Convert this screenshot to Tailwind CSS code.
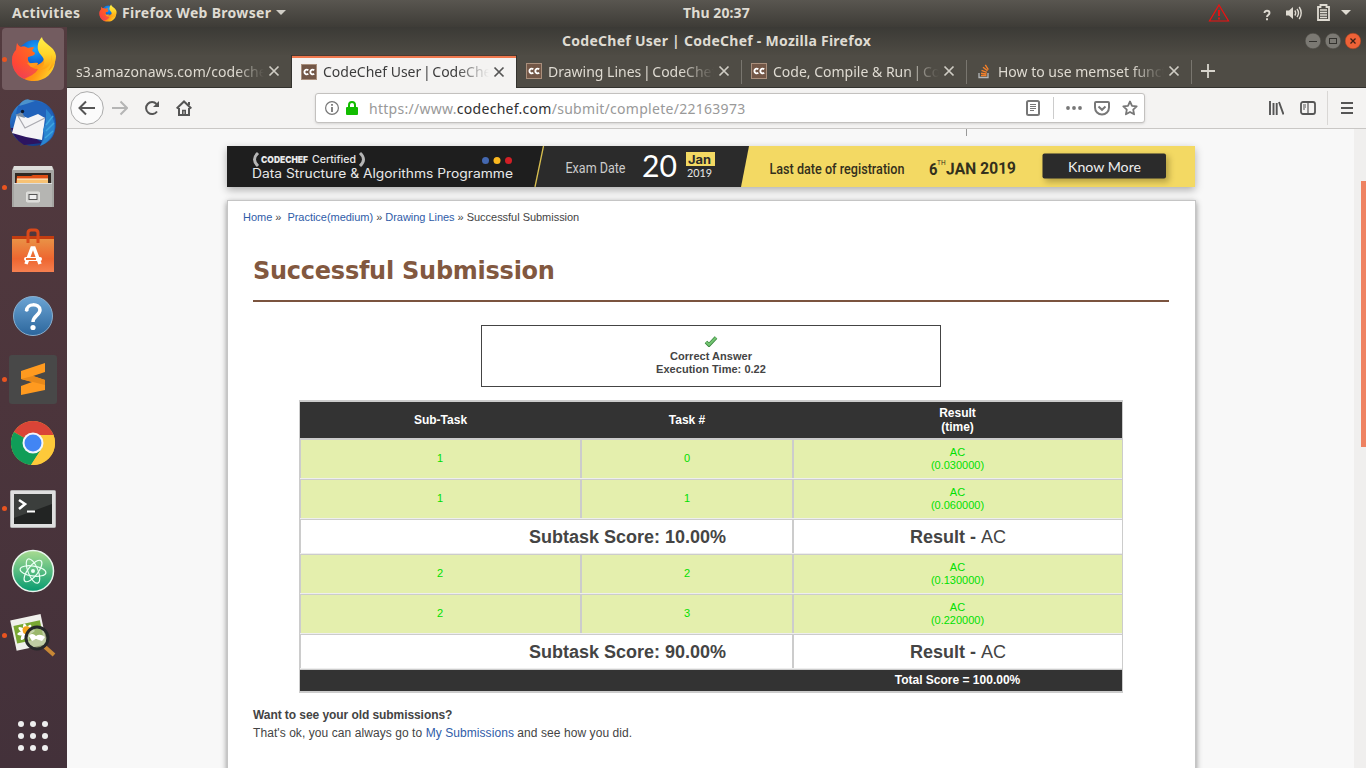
<!DOCTYPE html>
<html lang="en">
<head>
<meta charset="utf-8">
<title>CodeChef User | CodeChef</title>
<script src="https://cdn.jsdelivr.net/npm/@tailwindcss/browser@4"></script>
</head>
<body class="w-[1366px] h-[768px] overflow-hidden flex flex-col bg-[#f8f8f8] font-['Noto_Sans',sans-serif]">

<!-- shared shapes -->
<svg width="0" height="0" class="absolute">
  <defs>
    <symbol id="x" viewBox="0 0 12 12"><path d="M1.500 1.500 10.500 10.500M10.500 1.500 1.500 10.500" stroke="currentColor" stroke-width="1.700" fill="none"/></symbol>
    <symbol id="cc" viewBox="0 0 16 16"><rect x=".5" y=".5" width="15" height="15" fill="#735747" stroke="#a98f7c"/><path d="M7.300 6.200C5.600 4.900 3.400 5.900 3.400 8s2.200 3.100 3.900 1.800M13.200 6.200C11.500 4.900 9.300 5.900 9.300 8s2.200 3.100 3.900 1.800" fill="none" stroke="#fff" stroke-width="1.900"/></symbol>
    <linearGradient id="ffBody" x1="0" y1=".2" x2="1" y2=".7"><stop offset="0" stop-color="#ff2a4d"/><stop offset=".35" stop-color="#ff6a1c"/><stop offset=".7" stop-color="#ff9a14"/><stop offset="1" stop-color="#ffd42a"/></linearGradient>
    <linearGradient id="ffPink" x1="0" y1="0" x2="0" y2="1"><stop offset="0" stop-color="#ff7a18"/><stop offset=".55" stop-color="#ff4438"/><stop offset="1" stop-color="#e8177a"/></linearGradient>
    <linearGradient id="ffTail" x1="0" y1="0" x2="0" y2="1"><stop offset="0" stop-color="#fff04a"/><stop offset=".5" stop-color="#ffd52a"/><stop offset="1" stop-color="#ff9a10"/></linearGradient>
    <radialGradient id="ffBlue" cx=".5" cy=".25" r=".7"><stop offset="0" stop-color="#1aa6ff"/><stop offset=".6" stop-color="#0a5fd0"/><stop offset="1" stop-color="#1d2f86"/></radialGradient>
    <symbol id="firefox" viewBox="0 0 46 46">
      <circle cx="24" cy="22" r="18" fill="url(#ffBlue)"/>
      <path d="M6 7c1 2 2 3.500 4 4 3-1 5 0 7 1l6-1-2 4 3 2-1 2-6 2c-1 3 1 7 6 8 4 1 7-2 9-4 4-8 2-12-3-19 9 3 16 11 15 20-1 11-10 19-21 19C11 45 1 37 1 24c0-5 2-8 4-10z" fill="url(#ffBody)"/>
      <path d="M6 7c1 2 2 3.500 4 4 3-1 5 0 7 1l6-1-2 4 3 2-1 2-6 2c-2 6 2 12 10 12-2 5-10 8-14 10C5 39 1 32 1 24c0-5 2-8 4-10z" fill="url(#ffPink)" opacity=".6"/>
      <path d="M31 1c-5 5-6 13-1 18 5 5 4 11-1 15 9-1 13-8 11-15 2 4 1 10-3 16 5-3 8-9 8-15C44 10 32 8 31 1z" fill="url(#ffTail)"/>
      <path d="M16 27c4 1 7-1 11 0 0 2-3 4-7 4z" fill="#ff9a1c"/>
    </symbol>
  </defs>
</svg>

<!-- desktop top bar -->
<header class="h-[27px] pb-[2px] shrink-0 flex items-center bg-linear-to-b from-[#595650] to-[#3e3c37] text-[#dfdbd2] text-[14px] font-bold relative">
  <span class="ml-3 w-[87px] tracking-[0.33px]">Activities</span>
  <svg class="w-[18px] h-[18px]"><use href="#firefox"/></svg>
  <span class="ml-[5px] w-[154px] whitespace-nowrap tracking-[0.31px]">Firefox Web Browser</span>
  <svg width="10" height="5"><path d="M0 0h10L5 5z" fill="#d0cdc6"/></svg>
  <span class="absolute left-[683px] whitespace-nowrap tracking-[0.1px]">Thu 20:37</span>
  <div class="ml-auto flex items-center pr-[15px] h-full">
    <svg class="mr-[32px]" width="22" height="19"><path d="M11 2 20.500 18H1.500z" fill="none" stroke="#f01010" stroke-width="1.200"/><path d="M11 7v6M11 14.500v2" stroke="#f01010" stroke-width="1.800"/></svg>
    <svg class="mr-[14px] mt-[5px]" width="10" height="12"><path d="M2.500 4c0-3 5-3 5 0 0 2-2.500 2-2.500 4M5 9.300v2" fill="none" stroke="#dfdbd2" stroke-width="1.900"/></svg>
    <svg class="mr-[15px]" width="16" height="14"><path d="M0 4.500h3L7 1v12L3 9.500H0z" fill="#dfdbd2"/><path d="M8.800 4.500q1.700 2.500 0 5M11 3q3 4 0 8M13.200 1q4 6 0 12" fill="none" stroke="#dfdbd2" stroke-width="1.400"/></svg>
    <svg class="mr-[11px]" width="13" height="17"><path d="M1 3h2.500V1h6v2H12v13H1z" fill="none" stroke="#dfdbd2" stroke-width="1.800"/><path d="M3 6h7M3 8.500h7M3 11h7M3 13.500h7" stroke="#dfdbd2" stroke-width="1.300"/></svg>
    <svg width="10" height="5"><path d="M0 0h10L5 5z" fill="#dfdbd2"/></svg>
  </div>
</header>

<div class="flex flex-1 min-h-0">
  <!-- launcher -->
  <aside class="w-[67px] pr-px shrink-0 bg-linear-to-b from-[#533b3f] via-[#4c353c] to-[#43313a] flex flex-col items-center">
    <div class="mt-px w-[62px] h-[62px] shrink-0 rounded-[4px] bg-[#735c60] flex items-center"><i class="w-[5px] h-[5px] rounded-full bg-[#e95420]"></i><svg class="ml-1 w-[46px] h-[46px]"><use href="#firefox"/></svg></div>
    <svg class="mt-[8px] shrink-0" width="50" height="50" viewBox="0 0 50 50">
      <defs><linearGradient id="tb" x2=".6" y2="1"><stop stop-color="#3f9be0"/><stop offset=".4" stop-color="#2163bb"/><stop offset="1" stop-color="#123a86"/></linearGradient></defs>
      <circle cx="25" cy="25" r="23" fill="url(#tb)"/>
      <path d="M3 30q2 10 13 17l18-2-20-15z" fill="#2c1460"/>
      <path d="M8 19C8 7 14 1 22 2c9 0 18 5 22 12 5 9 5 21-2 28-3 3-7 5-10 6 3-6 3-11 2-16l-20-8z" fill="#2163bb"/>
      <path d="M9 16 20 20 30 16 37 20 34 42Q19 40 4 35z" fill="#f4f4f6"/>
      <path d="M10 18l7 12 20-10" fill="none" stroke="#a9a9b0" stroke-width="1.200"/>
      <path d="M38 11c7 7 10 14 8 22-2 7-7 12-14 15 5-7 5-12 3-16l3-8z" fill="#2b86d0"/>
      <path d="m38 27 7-9M38 33l8-8M37 40l8-7" fill="none" stroke="#3fa6e0" stroke-width="1.500"/>
      <path d="M11 8C14 2 19 0 22 2l5 1-9 3z" fill="#4c93cc"/><path d="m7 17 7-3 3 6-7-2z" fill="#7a8ea4"/><circle cx="14.500" cy="13.500" r="1.700" fill="#0d1a30"/>
    </svg>
    <div class="mt-4 w-full flex items-center h-[46px] shrink-0"><i class="ml-[2px] w-[5px] h-[5px] rounded-full bg-[#e95420]"></i>
      <svg class="ml-[5px]" width="42" height="44"><path d="M2 1h38l2 4v37H0V5z" fill="#a5a5a2"/><path d="M2 1h38l1 4H1z" fill="#dededb"/><path d="M3 8h36v12H3z" fill="#302823"/><path d="M5 11h14l2-1h15v9H4z" fill="#df4f16"/><path d="M5 14h31v6H5z" fill="#f7c274"/><path d="M5 14h31" stroke="#fff4d8"/><path d="M2 18h38v24H2z" fill="#b5b5b2"/><path d="M2 18h38v1H2z" fill="#ddd"/><rect x="14.500" y="27" width="13" height="10" rx="1" fill="#d8d8d5" stroke="#e2e2df"/><rect x="17" y="29.500" width="8" height="5" fill="#eee" stroke="#555"/></svg></div>
    <svg class="mt-[17px] shrink-0" width="44" height="46"><defs><linearGradient id="bag" x2="0" y2="1"><stop stop-color="#e99246"/><stop offset=".6" stop-color="#ee6630"/><stop offset="1" stop-color="#f58050"/></linearGradient></defs><path d="M1 9h42v5H1z" fill="#c23c10"/><path d="M1 12h42v33H1z" fill="url(#bag)"/><path d="M17 16V6q0-3 3-3h4q3 0 3 3v10" fill="none" stroke="#d9491a" stroke-width="3"/><path d="m15 37 6-16h2l6 16" fill="none" stroke="#fff" stroke-width="3.500"/><rect x="13" y="30" width="18" height="4" rx="2" fill="#fff"/><path d="M15 32h10" stroke="#ef7031" stroke-width="2"/></svg>
    <svg class="mt-[22px] shrink-0" width="42" height="42"><defs><linearGradient id="hp" x2="0" y2="1"><stop stop-color="#6ba4d4"/><stop offset="1" stop-color="#2c669c"/></linearGradient></defs><circle cx="21" cy="21" r="19.500" fill="url(#hp)" stroke="#8bb0cf"/><path d="M14.500 16c0-8 13-8 13.500-1 0 5-7 6-7 12" fill="none" stroke="#fff" stroke-width="3.500"/><circle cx="14.700" cy="15" r="1.800" fill="#fff"/><circle cx="21" cy="32.500" r="2.600" fill="#fff"/></svg>
    <div class="mt-[17px] w-full flex items-center h-[50px] shrink-0"><i class="ml-[2px] w-[5px] h-[5px] rounded-full bg-[#e95420]"></i>
      <svg class="ml-[2px]" width="48" height="49"><rect width="48" height="49" rx="3" fill="#484848"/><path d="m12 16 24-8v9l-12 4 12 4v10L12 40v-9l11-4-11-3z" fill="#ff9a1f"/><path d="m12 24 12-3 12 4v5L12 24z" fill="#e8891a"/></svg></div>
    <svg class="mt-[16px] shrink-0" width="46" height="46"><circle cx="23" cy="23" r="22" fill="#fdc93a"/><path d="M23 23 3.950 12A22 22 0 0 1 42.050 12L43.500 15H23z" fill="#da4437"/><path d="M3.950 12A22 22 0 0 0 21 45L32 28 23 23z" fill="#109d58"/><path d="M21 45A22 22 0 0 0 43.500 15H23l9 13z" fill="#fdc93a"/><circle cx="23" cy="23" r="10.500" fill="#f4f6fa"/><circle cx="23" cy="23" r="8.500" fill="#4285f4"/></svg>
    <div class="mt-[20px] w-full flex items-center h-[44px] shrink-0"><i class="ml-[2px] w-[5px] h-[5px] rounded-full bg-[#e95420]"></i>
      <svg class="ml-[3px] mt-0.5" width="46" height="38"><rect x=".5" y=".5" width="45" height="37" rx="1" fill="#dfdfdf" stroke="#b5b5b5"/><rect x="4" y="4" width="38" height="30" fill="#222423"/><path d="M4 4h38v10L4 28z" fill="#3b3e3c"/><path d="m9 10 6 4-6 5" fill="none" stroke="#fff" stroke-width="2.600"/><path d="M17 21.500h8" stroke="#fff" stroke-width="2"/></svg></div>
    <svg class="mt-[19px] shrink-0" width="44" height="44"><defs><linearGradient id="at" x2="0" y2="1"><stop stop-color="#a9dc91"/><stop offset="1" stop-color="#069b70"/></linearGradient></defs><circle cx="22" cy="22" r="20.500" fill="url(#at)" stroke="#e9f6ee" stroke-width="1.500"/><g fill="none" stroke="#eafff4" stroke-width="1.200"><ellipse cx="22" cy="22" rx="5" ry="13" transform="rotate(-22 22 22)"/><ellipse cx="22" cy="22" rx="5" ry="13" transform="rotate(38 22 22)"/><ellipse cx="22" cy="22" rx="5" ry="13" transform="rotate(98 22 22)"/></g><circle cx="22" cy="22" r="2" fill="#eafff4"/></svg>
    <div class="mt-[19px] w-full flex items-center h-[46px] shrink-0"><i class="ml-[2px] w-[5px] h-[5px] rounded-full bg-[#e95420]"></i>
      <svg class="ml-[3px]" width="46" height="46"><g transform="rotate(-12 18 20)"><rect x="3" y="5" width="31" height="31" fill="#f0f0ec"/><rect x="5" y="11" width="27" height="18" fill="#79a832"/><g fill="#fff"><ellipse cx="16" cy="20" rx="9" ry="2.500"/><ellipse cx="16" cy="20" rx="2.500" ry="9"/><ellipse cx="16" cy="20" rx="9" ry="2.500" transform="rotate(45 16 20)"/><ellipse cx="16" cy="20" rx="9" ry="2.500" transform="rotate(-45 16 20)"/></g><circle cx="17" cy="18" r="4" fill="#f3a21a"/></g><path d="m35 35 9 8" stroke="#c88836" stroke-width="4"/><circle cx="27" cy="26" r="11" fill="#a9bd86" fill-opacity=".7" stroke="#26282a" stroke-width="3"/><path d="M19 24q3-4 7 0 4-3 9 1l-3 4-6-2-4 2z" fill="#fff"/></svg></div>
    <svg class="mt-[62px] shrink-0" width="32" height="32" fill="#eee"><circle cx="4" cy="4" r="3"/><circle cx="16" cy="4" r="3"/><circle cx="28" cy="4" r="3"/><circle cx="4" cy="16" r="3"/><circle cx="16" cy="16" r="3"/><circle cx="28" cy="16" r="3"/><circle cx="4" cy="28" r="3"/><circle cx="16" cy="28" r="3"/><circle cx="28" cy="28" r="3"/></svg>
  </aside>

  <main class="flex-1 min-w-0 flex flex-col">
    <!-- window title -->
    <div class="h-[28px] shrink-0 bg-linear-to-b from-[#3b3a36] to-[#4e4b44] flex items-center justify-end relative text-[#dfdbd2] pr-[5px] gap-1">
      <span class="absolute left-[495px] top-[3px] text-[14px] font-bold whitespace-nowrap tracking-[0.27px]">CodeChef User | CodeChef - Mozilla Firefox</span>
      <svg width="16" height="18"><circle cx="8" cy="9" r="7.800" fill="#7b7973" stroke="#4a4842" stroke-width=".5"/><path d="M4 9.500h8" stroke="#33322e"/></svg>
      <svg width="16" height="18"><circle cx="8" cy="9" r="7.800" fill="#7b7973" stroke="#4a4842" stroke-width=".5"/><rect x="4.500" y="6.500" width="7" height="5" fill="none" stroke="#33322e"/></svg>
      <svg width="16" height="18"><circle cx="8" cy="9" r="7.800" fill="#ee6237" stroke="#a8431f" stroke-width=".5"/><path d="m5.500 6.500 5 5m0-5-5 5" stroke="#3b2016" stroke-width="1.300"/></svg>
    </div>
    <!-- tabs -->
    <nav class="h-[33px] shrink-0 bg-[#4f4c45] flex text-[14px] text-[#dfdbd2] whitespace-nowrap border-b border-[#33322e]">
      <div class="w-[224px] flex items-center pl-[9px]"><span class="w-[188px] overflow-hidden mask-r-from-85% mask-r-to-100% tracking-[0.08px]">s3.amazonaws.com/codechef</span><svg class="ml-1 w-3 h-3 text-[#cfccc4]"><use href="#x"/></svg></div>
      <div class="w-[226px] h-[33px] flex items-center pl-[9px] bg-[#f4f3f2] border-x border-[#33322e] text-[#3c3c3c] relative"><i class="absolute inset-x-0 top-0 h-[3px] bg-[#f0784e] border-t border-[#4b3a30]"></i><svg class="w-4 h-4"><use href="#cc"/></svg><span class="ml-[6px] w-[166px] overflow-hidden mask-r-from-80% mask-r-to-100%">CodeChef User<span class="mx-[-2px]"> | </span>CodeChef</span><svg class="ml-1 w-3 h-3 text-[#555]"><use href="#x"/></svg></div>
      <div class="w-[224px] flex items-center pl-[9px]"><svg class="w-4 h-4"><use href="#cc"/></svg><span class="ml-[6px] w-[166px] overflow-hidden mask-r-from-80% mask-r-to-100%">Drawing Lines<span class="mx-[-2px]"> | </span>CodeChef</span><svg class="ml-1 w-3 h-3 text-[#cfccc4]"><use href="#x"/></svg></div>
      <i class="w-px h-[24px] mt-[5px] bg-[#79766f]"></i>
      <div class="w-[224px] flex items-center pl-[9px]"><svg class="w-4 h-4"><use href="#cc"/></svg><span class="ml-[6px] w-[166px] overflow-hidden mask-r-from-80% mask-r-to-100%">Code, Compile &amp; Run<span class="mx-[-2px]"> | </span>CodeChef</span><svg class="ml-1 w-3 h-3 text-[#cfccc4]"><use href="#x"/></svg></div>
      <i class="w-px h-[24px] mt-[5px] bg-[#79766f]"></i>
      <div class="w-[224px] flex items-center pl-[9px]"><svg width="16" height="16"><path d="M3 10v4.500h9V10" fill="none" stroke="#b5b8ba" stroke-width="1.300"/><path d="M5 12.500h5.500M5 10.200l5.500.8M5.500 7.300l5.300 2M7 4.200l4.500 3.600M9.300 1.800l3 4.800" stroke="#f4802a" stroke-width="1.400"/></svg><span class="ml-[6px] w-[166px] overflow-hidden mask-r-from-80% mask-r-to-100%">How to use memset function</span><svg class="ml-1 w-3 h-3 text-[#cfccc4]"><use href="#x"/></svg></div>
      <i class="w-px h-[24px] mt-[5px] bg-[#79766f]"></i>
      <svg class="ml-[9px] mt-[9px]" width="14" height="14"><path d="M7 0v14M0 7h14" stroke="#d8d5cd" stroke-width="1.800"/></svg>
    </nav>
    <!-- navigation toolbar -->
    <div class="h-[41px] shrink-0 bg-[#f4f3f2] border-b border-[#c9c7c5] flex items-center text-[#555]">
      <svg class="ml-[3px]" width="34" height="34" fill="none" stroke="#555" stroke-width="2"><circle cx="17" cy="17" r="16.300" fill="#fbfbfb" stroke="#aaa" stroke-width="1"/><path d="M25 17H10M16 10.500 9.500 17l6.500 6.500"/></svg>
      <svg class="ml-[8px]" width="16" height="16" fill="none" stroke="#b5b5b5" stroke-width="2"><path d="M0 8h14M8.500 1.500 15 8l-6.500 6.500"/></svg>
      <svg class="ml-[16px]" width="16" height="16" fill="none" stroke="#555" stroke-width="2"><path d="M13 11.500A6 6 0 1 1 12.500 4"/><path d="M15 1v6H9z" fill="#555" stroke="none"/></svg>
      <svg class="ml-[16px]" width="16" height="16" fill="none" stroke="#555" stroke-width="2"><path d="M.7 8.500 8 1.500l7.300 7M3 8v7h10V8M13 2v3"/><path d="M6.800 14v-3.500h2.400V14" stroke-width="1.600"/></svg>
      <div class="ml-[123px] w-[830px] h-[30px] bg-white border border-[#c3c1bf] rounded-[3px] flex items-center shadow-sm">
        <svg class="ml-[9px]" width="14" height="14" fill="none" stroke="#777"><circle cx="7" cy="7" r="6.400" stroke-width="1.200"/><path d="M7 6v5M7 3v1.800" stroke-width="1.800"/></svg>
        <svg class="ml-[7px]" width="12" height="14"><path d="M3 7V4a3 3 0 0 1 6 0v3" fill="none" stroke="#12bc00" stroke-width="2"/><rect y="6" width="12" height="8" rx="1" fill="#12bc00"/></svg>
        <span class="ml-[11px] text-[14px] text-[#999] whitespace-nowrap tracking-[0.28px]">https://www.<b class="font-normal text-[#303030]">codechef.com</b>/submit/complete/22163973</span>
        <div class="ml-auto flex items-center pr-[6px]">
          <svg width="14" height="16" fill="none" stroke="#777"><rect x="1" y="1" width="12" height="14" rx="1.500" stroke-width="2"/><path d="M4 4.500h6M4 6.500h6M4 8.500h6M4 10.500h4"/></svg>
          <i class="w-px h-[22px] bg-[#ccc] ml-[13px] mr-[12px]"></i>
          <svg width="16" height="4" fill="#777"><circle cx="2" cy="2" r="1.900"/><circle cx="8" cy="2" r="1.900"/><circle cx="14" cy="2" r="1.900"/></svg>
          <svg class="ml-3" width="16" height="15" fill="none" stroke="#777" stroke-width="2"><path d="M2 1h12q1 0 1 1v4.500a7 7 0 0 1-14 0V2q0-1 1-1z"/><path d="m4.500 5.500 3.500 3.300 3.500-3.300"/></svg>
          <svg class="ml-3" width="16" height="16" fill="none" stroke="#777" stroke-width="1.800"><path d="m8 1.500 2 4.300 4.700.6-3.500 3.200.9 4.700L8 12l-4.100 2.300.9-4.700L1.300 6.400 6 5.800z" stroke-linejoin="round"/></svg>
        </div>
      </div>
      <svg class="ml-[124px]" width="15" height="14" stroke="#555" stroke-width="1.900"><path d="M1 0v14M4.500 2v12M7.700 2v12M10 1l4.500 12.500"/></svg>
      <svg class="ml-4" width="16" height="14" fill="none" stroke="#555" stroke-width="1.800"><rect x="1" y="1" width="14" height="12" rx="2"/><path d="M8 1v12" stroke-width="1.200"/><path d="M3 4h3M3 6h3M3 8h2" stroke-width="1"/></svg>
      <i class="ml-[11px] w-px h-[34px] bg-[#d9d7d5]"></i>
      <svg class="ml-[13px]" width="12" height="14" stroke="#555" stroke-width="2"><path d="M0 2h12M0 7h12M0 12h12"/></svg>
    </div>

    <!-- web page -->
    <div class="flex-1 min-h-0 flex bg-[#f8f8f8] overflow-hidden">
      <div class="w-[1287px] pl-[160px] font-['Liberation_Sans',sans-serif] text-[11px] text-[#444]">
        <div class="h-[17px] flex"><i class="ml-[739px] w-px h-[7px] bg-[#999]"></i></div>
        <svg class="block w-[968px] h-[41px] shadow-[0_3px_8px_rgba(0,0,0,.3)]" viewBox="0 0 968 41">
          <rect width="968" height="41" fill="#f3d963"/>
          <path d="M0 0h522l-8 41H0z" fill="#2b2b2b"/><path d="M0 0h316l-9 41H0z" fill="#1e1e1e"/><path d="M316.500 0l-8.500 41" stroke="#d9c04f" stroke-width="1.300"/>
          <g fill="none" stroke="#b5b5b5" stroke-width="3"><path d="M31 7q-7 6.500 0 13M133 7q7 6.500 0 13"/></g>
          <g fill="#e8e8e8">
            <text x="34" y="17" font-family="Inter" font-weight="900" font-size="9.500" textLength="47" lengthAdjust="spacingAndGlyphs">CODECHEF</text>
            <text x="85" y="17" font-family="Inter" font-weight="500" font-size="10.500" textLength="44" lengthAdjust="spacingAndGlyphs">Certified</text>
            <text x="25" y="32" font-family="Inter" font-size="12.500" textLength="261" lengthAdjust="spacingAndGlyphs">Data Structure &amp; Algorithms Programme</text>
            <text x="338.500" y="27" fill="#ccc" font-family="Roboto" font-size="14" textLength="60" lengthAdjust="spacingAndGlyphs">Exam Date</text>
            <text x="415" y="31" fill="#fff" font-family="Lato" font-size="31" textLength="35" lengthAdjust="spacingAndGlyphs">20</text>
            <text x="460" y="30.500" font-family="Lato" font-size="11.500" textLength="25" lengthAdjust="spacingAndGlyphs">2019</text>
          </g>
          <rect x="459" y="6" width="29" height="14" fill="#f3d963"/>
          <text x="461" y="17.500" fill="#2b2b2b" font-family="Inter" font-weight="700" font-size="12" textLength="23" lengthAdjust="spacingAndGlyphs">Jan</text>
          <circle cx="258.500" cy="14.500" r="3.500" fill="#4468b0"/><circle cx="270" cy="14.500" r="3.500" fill="#fbb81f"/><circle cx="281.500" cy="14.500" r="3.500" fill="#d21f26"/>
          <g fill="#33301c" font-family="Roboto"><text x="542.500" y="27.500" font-size="14" font-weight="500" textLength="135" lengthAdjust="spacingAndGlyphs">Last date of registration</text>
          <text x="702" y="28.500" font-size="17" font-weight="700" textLength="8.500" lengthAdjust="spacingAndGlyphs">6</text><text x="710" y="19" font-size="6.500">TH</text><text x="719" y="28" font-size="16.500" font-weight="700" textLength="70" lengthAdjust="spacingAndGlyphs" transform="rotate(-1 754 22)">JAN 2019</text></g>
          <rect x="818" y="10" width="124" height="26" rx="2" fill="#6b5c20" opacity=".45" style="filter:blur(3px)"/>
          <rect x="815.500" y="7.500" width="123.500" height="25" rx="2" fill="#2b2b2b"/>
          <text x="841" y="26" fill="#eee" font-family="Lato" font-size="13" textLength="73" lengthAdjust="spacingAndGlyphs">Know More</text>
        </svg>

        <section class="mt-[13px] ml-0 w-[969px] h-[620px] bg-white border border-[#c5c5c5] shadow-[0_2px_6px_rgba(0,0,0,.45)]">
          <div class="pl-[15px] pt-[10px] h-[24px] leading-[13px] whitespace-pre tracking-[-0.03px]"><a class="text-[#2f5ca8]">Home</a> »  <a class="text-[#2f5ca8]">Practice(medium)</a> » <a class="text-[#2f5ca8]">Drawing Lines</a> » Successful Submission</div>
          <div class="mx-[25px] w-[916px]">
            <h1 class="h-[77px] pt-[30px] border-b-2 border-[#7b543f] font-['DejaVu_Sans',sans-serif] font-bold text-[24px] tracking-[-0.25px] leading-[32px] text-[#82583f]">Successful Submission</h1>
            <div class="mt-[23px] mx-auto w-[460px] h-[62px] border border-[#444] flex flex-col items-center font-bold leading-[13px] pt-[10px]">
              <svg width="14" height="11" class="mb-[3px]"><path d="m2 6 3 3 7-7.500" fill="none" stroke="#35843b" stroke-width="3.600"/><path d="m2 6 3 2.700L12 1.500" fill="none" stroke="#74c472" stroke-width="2.200"/></svg>
              <span class="tracking-[0.03px]">Correct Answer</span><span class="tracking-[0.03px]">Execution Time: 0.22</span>
            </div>

            <div class="mt-[13px] ml-[46px] w-[824px] border border-b-2 border-[#ccc] leading-[13px] text-center text-[#00e000]">
              <div class="grid grid-cols-[281px_212px_329px] h-[38px] bg-[#333] border-y border-[#ccc] items-center text-white font-bold text-[12px] leading-[14px]"><span>Sub-Task</span><span>Task #</span><span>Result<br>(time)</span></div>
              <div class="grid grid-cols-[281px_212px_329px] h-10 bg-[#e4efad] border-t border-t-[#ccc] border-b border-b-[#eee]"><span class="border-x border-[#ccc] grid place-items-center pb-[2px] pr-px">1</span><span class="border-x border-[#ccc] grid place-items-center pb-[2px]">0</span><span class="border-l border-[#ccc] grid place-items-center pr-px">AC<br>(0.030000)</span></div>
              <div class="grid grid-cols-[281px_212px_329px] h-10 bg-[#e4efad] border-t border-t-[#ccc] border-b border-b-[#eee]"><span class="border-x border-[#ccc] grid place-items-center pb-[2px] pr-px">1</span><span class="border-x border-[#ccc] grid place-items-center pb-[2px]">1</span><span class="border-l border-[#ccc] grid place-items-center pr-px">AC<br>(0.060000)</span></div>
              <div class="grid grid-cols-[493px_329px] h-[35px] bg-white border-t border-t-[#ccc] border-b border-b-[#eee] text-[18px] leading-[33px] text-[#444]"><b class="border-x border-[#ccc] text-right pr-[66px] h-[33px] leading-[35px]">Subtask Score: 10.00%</b><span class="border-l border-[#ccc] h-[33px] leading-[35px]"><b>Result - </b>AC</span></div>
              <div class="grid grid-cols-[281px_212px_329px] h-10 bg-[#e4efad] border-t border-t-[#ccc] border-b border-b-[#eee]"><span class="border-x border-[#ccc] grid place-items-center pb-[2px] pr-px">2</span><span class="border-x border-[#ccc] grid place-items-center pb-[2px]">2</span><span class="border-l border-[#ccc] grid place-items-center pr-px">AC<br>(0.130000)</span></div>
              <div class="grid grid-cols-[281px_212px_329px] h-10 bg-[#e4efad] border-t border-t-[#ccc] border-b border-b-[#eee]"><span class="border-x border-[#ccc] grid place-items-center pb-[2px] pr-px">2</span><span class="border-x border-[#ccc] grid place-items-center pb-[2px]">3</span><span class="border-l border-[#ccc] grid place-items-center pr-px">AC<br>(0.220000)</span></div>
              <div class="grid grid-cols-[493px_329px] h-[35px] bg-white border-t border-t-[#ccc] border-b border-b-[#eee] text-[18px] leading-[33px] text-[#444]"><b class="border-x border-[#ccc] text-right pr-[66px] h-[33px] leading-[35px]">Subtask Score: 90.00%</b><span class="border-l border-[#ccc] h-[33px] leading-[35px]"><b>Result - </b>AC</span></div>
              <div class="h-[22px] bg-[#333] border-t border-[#ccc] text-white font-bold text-[12px] leading-[20px] pl-[493px]">Total Score = 100.00%</div>
            </div>
            <p class="mt-[13px] text-[12px] leading-[18px] font-bold tracking-[-0.07px]">Want to see your old submissions?</p>
            <p class="text-[12px] leading-[18px] tracking-[0.07px]">That's ok, you can always go to <a class="text-[#2f5ca8]">My Submissions</a> and see how you did.</p>
          </div>
        </section>
      </div>
      <div class="w-[12px] bg-[#f0efee] flex justify-end"><i class="mt-[52px] w-[5px] h-[266px] bg-[#ee8261]"></i></div>
    </div>
  </main>
</div>
</body>
</html>
